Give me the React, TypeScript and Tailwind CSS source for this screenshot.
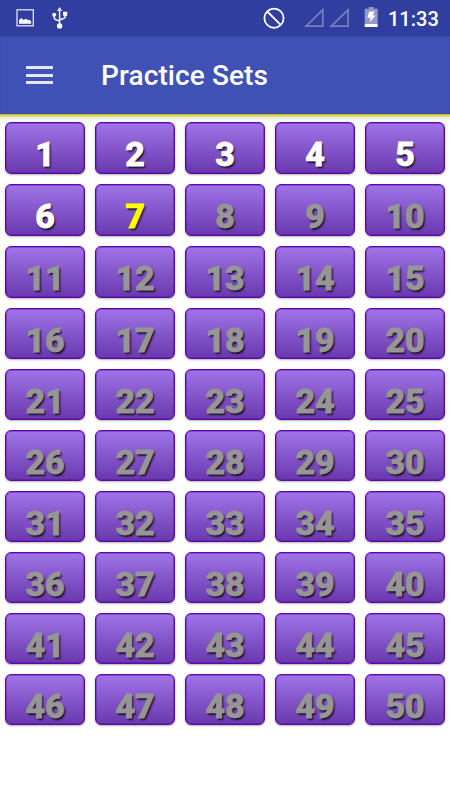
import React from "react";

const rowHeights = [
  "h-[62px]", "h-[62px]", "h-[61.5px]", "h-[61.5px]", "h-[61px]",
  "h-[61px]", "h-[61px]", "h-[61px]", "h-[61px]", "h-[61px]",
];

function SetButton({ n }: { n: number }) {
  const tone = n < 7 ? "text-white" : n === 7 ? "text-[#ffff00]" : "text-[#969696]";
  return (
    <button
      className={`flex h-full min-h-0 items-start justify-center rounded-[6px] border border-[#5a08a8] bg-linear-to-b from-[#a074e8] to-[#6a38ae] pt-[14px] text-[34px] leading-[34px] font-extrabold shadow-[0_1px_2px_rgba(0,0,0,0.3),inset_0_0_0_1px_rgba(90,8,168,0.4)] [text-shadow:1.5px_1.5px_2px_rgba(0,0,0,0.8)] [-webkit-text-stroke:0.8px_currentColor] ${tone}`}
    >
      {n}
    </button>
  );
}

function StatusBar() {
  return (
    <div className="flex h-9 items-center bg-[#303f9f] text-white">
      <svg width="382" height="36" viewBox="0 0 382 36" fill="none" className="shrink-0">
        <rect x="17" y="9.8" width="16.3" height="16" stroke="#dfe2f3" strokeWidth="1.3" />
        <path d="M19 23.7v-3.4l2.2-2.3 2.4 2 2.3-1.2 2.3 1.5 1.3-.6 1.7 1.8v2.2z" fill="#fff" />
        <g stroke="#f0f1fa" strokeWidth="1.5">
          <path d="M59.6 9.5V26M54.2 15v2.5q0 2 2.4 2.4l3 1.3M65.2 14v2.2q0 2-2.4 2.6l-3.2 1.2" />
        </g>
        <path d="M59.6 7l2.5 4h-5zM63 11.7h4.2v4H63z" fill="#fff" />
        <circle cx="54.2" cy="14.7" r="2" fill="#fff" />
        <circle cx="59.6" cy="26" r="2.7" fill="#fff" />
        <circle cx="274" cy="18.2" r="9.6" stroke="#fff" strokeWidth="1.8" />
        <path d="M267.3 11.5l13.4 13.4" stroke="#fff" strokeWidth="1.8" />
        <path d="M322.8 9.8V26.1H306zM348.1 9.8V26.1H331.3z" stroke="#7680c0" strokeWidth="1.7" />
        <path d="M368.7 7h5v1.8h4V24h-13V8.8h4z" fill="#9199cc" />
        <path d="M364.7 24h13v3h-13z" fill="#fff" />
        <path d="M369.2 11.5h5.4l-2 4h3l-5.9 7 1.1-4.7h-3.4z" fill="#fff" />
      </svg>
      <span className="ml-[6px] pt-px text-[20px] leading-none font-medium">11:33</span>
    </div>
  );
}

export default function App() {
  return (
    <div className="flex h-[800px] w-[450px] flex-col overflow-hidden bg-white font-['Roboto','Noto_Sans',sans-serif]">
      <StatusBar />
      <header className="flex h-[78px] items-center bg-[#3f51b5] shadow-[inset_0_1px_1px_rgba(48,63,159,0.5),inset_0_-1px_0_#394aa9]">
        <div className="ml-[26px] flex w-[27px] flex-col gap-[4.5px]">
          <span className="h-[3px] bg-[#e4e6f5]" />
          <span className="h-[3px] bg-[#e4e6f5]" />
          <span className="h-[3px] bg-[#e4e6f5]" />
        </div>
        <h1 className="ml-[48px] pt-[2px] text-[28px] leading-none font-medium tracking-[0.1px] text-white">Practice Sets</h1>
      </header>
      <div className="h-[3px] shrink-0 bg-linear-to-b from-[#aaa864] via-[#dedb35] to-[#e8e66f]" />
      <main className="h-[683px] bg-linear-to-b from-[#e8e8e8] to-white to-[5px] pt-[5px]">
        {rowHeights.map((h, r) => (
          <div key={r} className={`grid grid-cols-[80px_80px_80px_80px_80px] gap-x-[10px] px-[5px] pb-[10px] ${h}`}>
            {[1, 2, 3, 4, 5].map((c) => (
              <SetButton key={c} n={r * 5 + c} />
            ))}
          </div>
        ))}
      </main>
    </div>
  );
}
